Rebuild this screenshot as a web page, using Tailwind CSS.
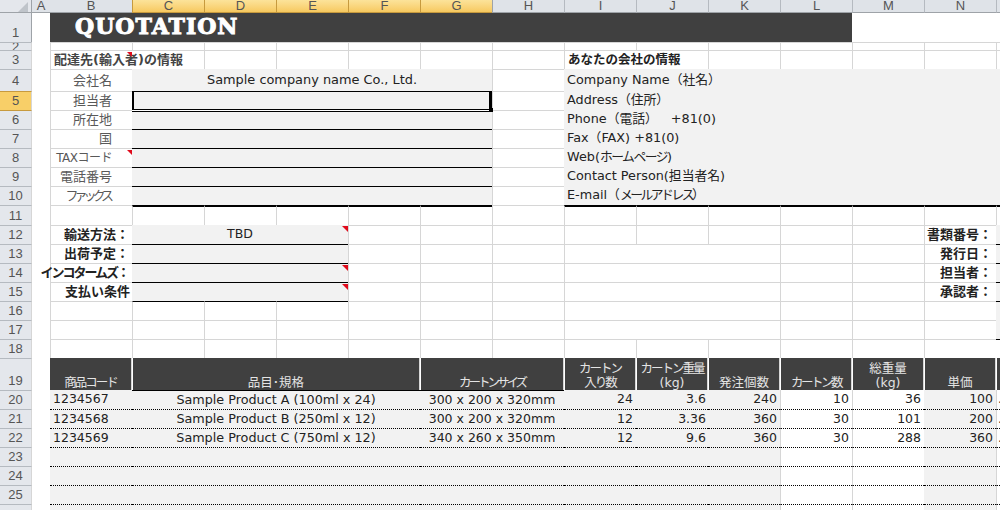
<!DOCTYPE html>
<html lang="ja">
<head>
  <meta charset="UTF-8" />
  <title>Quotation</title>
  <script src="https://cdn.jsdelivr.net/npm/@tailwindcss/browser@4"></script>
</head>
<body class="bg-white overflow-hidden">
  <!-- One grid for the whole sheet: cells draw their own top/left gridlines, fills sit over them -->
  <div class="w-[1000px] h-[510px] overflow-hidden grid grid-cols-[32px_18px_82px_repeat(12,72px)_4px] grid-rows-[13px_29px_8px_19px_22px_19px_19px_19px_19px_19px_19px_20px_19px_19px_19px_19px_19px_19px_19px_32px_19px_19px_19px_19px_19px_19px_6px] font-['DejaVu_Sans','Noto_Sans_CJK_JP',sans-serif] text-[12.5px] text-[#222222] [&>div]:border-t [&>div]:border-l [&>div]:border-[#d6d6d6] [&>div]:whitespace-nowrap">

    <!-- Column headers -->
    <div class="border-0! border-r! border-r-[#9ea3a8]! border-b! border-b-[#9ea3a8]! bg-[#e4e7ec] relative"><span class="absolute left-[18px] top-[2px] size-[10px] bg-[#bfc4ca] [clip-path:polygon(100%_0,100%_100%,0_100%)]"></span></div>
    <div class="border-0! border-b! border-b-[#9ea3a8]! bg-[#dfe3e8] font-['Liberation_Sans'] text-[#555555] text-[13px] leading-[12px] text-center">A</div>
    <div class="border-t-0! border-l-0! border-b! border-b-[#9ea3a8]! bg-[#dfe3e8] font-['Liberation_Sans'] text-[#555555] text-[13px] leading-[12px] text-center">B</div>
    <div class="border-t-0! border-l-[#c79a3e]! border-b! border-b-[#c79a3e]! bg-linear-to-b from-[#fce39a] to-[#f7c95f] font-['Liberation_Sans'] text-[#555555] text-[13px] leading-[12px] text-center">C</div>
    <div class="border-t-0! border-l-[#c79a3e]! border-b! border-b-[#c79a3e]! bg-linear-to-b from-[#fce39a] to-[#f7c95f] font-['Liberation_Sans'] text-[#555555] text-[13px] leading-[12px] text-center">D</div>
    <div class="border-t-0! border-l-[#c79a3e]! border-b! border-b-[#c79a3e]! bg-linear-to-b from-[#fce39a] to-[#f7c95f] font-['Liberation_Sans'] text-[#555555] text-[13px] leading-[12px] text-center">E</div>
    <div class="border-t-0! border-l-[#c79a3e]! border-b! border-b-[#c79a3e]! bg-linear-to-b from-[#fce39a] to-[#f7c95f] font-['Liberation_Sans'] text-[#555555] text-[13px] leading-[12px] text-center">F</div>
    <div class="border-t-0! border-l-[#c79a3e]! border-b! border-b-[#c79a3e]! bg-linear-to-b from-[#fce39a] to-[#f7c95f] font-['Liberation_Sans'] text-[#555555] text-[13px] leading-[12px] text-center">G</div>
    <div class="border-t-0! border-l-[#9ea3a8]! border-b! border-b-[#9ea3a8]! bg-[#dfe3e8] font-['Liberation_Sans'] text-[#555555] text-[13px] leading-[12px] text-center">H</div>
    <div class="border-t-0! border-l-[#b5bac0]! border-b! border-b-[#9ea3a8]! bg-[#dfe3e8] font-['Liberation_Sans'] text-[#555555] text-[13px] leading-[12px] text-center">I</div>
    <div class="border-t-0! border-l-[#b5bac0]! border-b! border-b-[#9ea3a8]! bg-[#dfe3e8] font-['Liberation_Sans'] text-[#555555] text-[13px] leading-[12px] text-center">J</div>
    <div class="border-t-0! border-l-[#b5bac0]! border-b! border-b-[#9ea3a8]! bg-[#dfe3e8] font-['Liberation_Sans'] text-[#555555] text-[13px] leading-[12px] text-center">K</div>
    <div class="border-t-0! border-l-[#b5bac0]! border-b! border-b-[#9ea3a8]! bg-[#dfe3e8] font-['Liberation_Sans'] text-[#555555] text-[13px] leading-[12px] text-center">L</div>
    <div class="border-t-0! border-l-[#b5bac0]! border-b! border-b-[#9ea3a8]! bg-[#dfe3e8] font-['Liberation_Sans'] text-[#555555] text-[13px] leading-[12px] text-center">M</div>
    <div class="border-t-0! border-l-[#b5bac0]! border-b! border-b-[#9ea3a8]! bg-[#dfe3e8] font-['Liberation_Sans'] text-[#555555] text-[13px] leading-[12px] text-center">N</div>
    <div class="border-t-0! border-l-[#b5bac0]! border-b! border-b-[#9ea3a8]! bg-[#dfe3e8]"></div>

    <!-- Row 1 -->
    <div class="border-0! border-r! border-r-[#9ea3a8]! bg-[#e4e7ec] flex items-end justify-center text-[#555555] font-['Liberation_Sans'] text-[13px]">1</div>
    <div class="border-0!"></div>
    <div class="col-span-11 border-0! bg-[#404040] flex items-center pl-[25px] pb-[2px] font-['DejaVu_Serif'] font-bold text-[22px] tracking-[1px] [-webkit-text-stroke:1px_white] text-white">QUOTATION</div>
    <div class="col-span-3 border-0!"></div>

    <!-- Row 2 -->
    <div class="border-l-0! border-t-[#b5bac0]! border-r border-r-[#9ea3a8] bg-[#e4e7ec] overflow-hidden flex items-start justify-center text-[#555555] font-['Liberation_Sans'] text-[13px] leading-[8px]">2</div>
    <div class="border-0!"></div>
    <div></div><div></div><div></div><div></div><div></div><div></div><div></div><div></div><div></div><div></div><div></div><div></div><div></div><div></div>

    <!-- Row 3 -->
    <div class="border-l-0! border-t-[#b5bac0]! border-r border-r-[#9ea3a8] bg-[#e4e7ec] flex items-center justify-center text-[#555555] font-['Liberation_Sans'] text-[13px]">3</div>
    <div class="border-0!"></div>
    <div class="relative flex items-center pl-[3px] font-bold text-[13px] text-[#444444]">配達先(輸入者)の情報<span class="absolute right-0 top-[1px] size-[5px] bg-[#e00b1c] [clip-path:polygon(0_0,100%_0,100%_100%)]"></span></div>
    <div class="border-l-0!"></div><div></div><div></div><div></div><div></div><div></div>
    <div class="flex items-center pl-[3px] font-bold">あなたの会社の情報</div>
    <div class="border-l-0!"></div><div></div><div></div><div></div><div></div><div></div>

    <!-- Row 4 -->
    <div class="border-l-0! border-t-[#b5bac0]! border-r border-r-[#9ea3a8] bg-[#e4e7ec] flex items-center justify-center text-[#555555] font-['Liberation_Sans'] text-[13px]">4</div>
    <div class="border-0!"></div>
    <div class="flex items-center justify-end pr-[20px] text-[#595959] text-[13px]">会社名</div>
    <div class="col-span-5 border-0! bg-[#f2f2f2] flex items-center justify-center text-[12.9px]">Sample company name Co., Ltd.</div>
    <div></div>
    <div class="col-span-7 border-0! bg-[#f2f2f2] flex items-center pl-[3px] text-[12.8px]">Company Name（社名）</div>

    <!-- Row 5, holds the selected cell -->
    <div class="border-l-0! border-t-[#c79a3e]! border-r border-r-[#c79a3e] bg-[#f8cf68] flex items-center justify-center text-[#555555] font-['Liberation_Sans'] text-[13px]">5</div>
    <div class="border-0!"></div>
    <div class="flex items-center justify-end pr-[20px] text-[#595959] text-[13px]">担当者</div>
    <div class="col-span-5 border-0! bg-[#f2f2f2] relative">
      <div class="absolute inset-x-0 top-0 h-[21px] border-y border-black z-10">
        <span class="absolute left-0 -top-[1px] w-[2px] h-[19px] bg-black"></span>
        <span class="absolute right-0 -top-[1px] w-[3px] h-[19px] bg-black"></span>
        <span class="absolute inset-x-0 top-[17px] h-[1px] bg-black"></span>
        <span class="absolute inset-x-0 top-[18px] h-[1px] bg-white"></span>
        <span class="absolute -right-[1px] top-[16px] size-[4px] bg-black"></span>
      </div>
    </div>
    <div></div>
    <div class="col-span-7 border-0! bg-[#f2f2f2] flex items-center pl-[3px] pb-[2px] text-[12.8px]">Address（住所）</div>

    <!-- Row 6 -->
    <div class="border-l-0! border-t-[#c79a3e]! border-r border-r-[#9ea3a8] bg-[#e4e7ec] flex items-center justify-center text-[#555555] font-['Liberation_Sans'] text-[13px]">6</div>
    <div class="border-0!"></div>
    <div class="flex items-center justify-end pr-[20px] text-[#595959] text-[13px]">所在地</div>
    <div class="col-span-5 border-l-0! border-t-black! bg-[#f2f2f2]"></div>
    <div></div>
    <div class="col-span-7 border-0! bg-[#f2f2f2] flex items-center pl-[3px] pb-[2px] text-[12.8px]">Phone（電話）<span class="pl-[13px]">+81(0)</span></div>

    <!-- Row 7 -->
    <div class="border-l-0! border-t-[#b5bac0]! border-r border-r-[#9ea3a8] bg-[#e4e7ec] flex items-center justify-center text-[#555555] font-['Liberation_Sans'] text-[13px]">7</div>
    <div class="border-0!"></div>
    <div class="flex items-center justify-end pr-[20px] text-[#595959] text-[13px]">国</div>
    <div class="col-span-5 border-l-0! border-t-black! bg-[#f2f2f2]"></div>
    <div></div>
    <div class="col-span-7 border-0! bg-[#f2f2f2] flex items-center pl-[3px] pb-[2px] text-[12.8px]">Fax（FAX) +81(0)</div>

    <!-- Row 8 -->
    <div class="border-l-0! border-t-[#b5bac0]! border-r border-r-[#9ea3a8] bg-[#e4e7ec] flex items-center justify-center text-[#555555] font-['Liberation_Sans'] text-[13px]">8</div>
    <div class="border-0!"></div>
    <div class="relative flex items-center justify-end pr-[20px] text-[#595959] text-[12px] tracking-[-0.5px]">TAXコード<span class="absolute right-0 top-[1px] size-[5px] bg-[#e00b1c] [clip-path:polygon(0_0,100%_0,100%_100%)]"></span></div>
    <div class="col-span-5 border-l-0! border-t-black! bg-[#f2f2f2]"></div>
    <div></div>
    <div class="col-span-7 border-0! bg-[#f2f2f2] flex items-center pl-[3px] pb-[2px] text-[12.8px]">Web(<span class="tracking-[-1.5px]">ホームページ</span>)</div>

    <!-- Row 9 -->
    <div class="border-l-0! border-t-[#b5bac0]! border-r border-r-[#9ea3a8] bg-[#e4e7ec] flex items-center justify-center text-[#555555] font-['Liberation_Sans'] text-[13px]">9</div>
    <div class="border-0!"></div>
    <div class="flex items-center justify-end pr-[20px] text-[#595959] text-[13px]">電話番号</div>
    <div class="col-span-5 border-l-0! border-t-black! bg-[#f2f2f2]"></div>
    <div></div>
    <div class="col-span-7 border-0! bg-[#f2f2f2] flex items-center pl-[3px] pb-[2px] text-[12.8px]">Contact Person(担当者名)</div>

    <!-- Row 10 -->
    <div class="border-l-0! border-t-[#b5bac0]! border-r border-r-[#9ea3a8] bg-[#e4e7ec] flex items-center justify-center text-[#555555] font-['Liberation_Sans'] text-[13px]">10</div>
    <div class="border-0!"></div>
    <div class="flex items-center justify-end pr-[22px] text-[#595959] text-[13px] tracking-[-4px]">ファックス</div>
    <div class="col-span-5 border-l-0! border-t-black! bg-[#f2f2f2]"></div>
    <div></div>
    <div class="col-span-7 border-0! bg-[#f2f2f2] flex items-center pl-[3px] pb-[2px] text-[12.8px]">E-mail（<span class="tracking-[-2.5px]">メールアドレス</span>）</div>

    <!-- Row 11 -->
    <div class="border-l-0! border-t-[#b5bac0]! border-r border-r-[#9ea3a8] bg-[#e4e7ec] flex items-center justify-center text-[#555555] font-['Liberation_Sans'] text-[13px]">11</div>
    <div class="border-0!"></div>
    <div></div>
    <div class="border-t-2! border-t-black!"></div><div class="border-t-2! border-t-black!"></div><div class="border-t-2! border-t-black!"></div><div class="border-t-2! border-t-black!"></div><div class="border-t-2! border-t-black!"></div>
    <div></div>
    <div class="border-t-2! border-t-black!"></div><div class="border-t-2! border-t-black!"></div><div class="border-t-2! border-t-black!"></div><div class="border-t-2! border-t-black!"></div><div class="border-t-2! border-t-black!"></div><div class="border-t-2! border-t-black!"></div><div class="border-t-2! border-t-black!"></div>

    <!-- Row 12 -->
    <div class="border-l-0! border-t-[#b5bac0]! border-r border-r-[#9ea3a8] bg-[#e4e7ec] flex items-center justify-center text-[#555555] font-['Liberation_Sans'] text-[13px]">12</div>
    <div class="border-0!"></div>
    <div class="flex items-center justify-end pr-[3px] font-bold text-[13px]">輸送方法：</div>
    <div class="col-span-3 border-0! bg-[#f2f2f2] relative flex items-center justify-center">TBD<span class="absolute right-0 top-[1px] size-[6px] bg-[#e00b1c] [clip-path:polygon(0_0,100%_0,100%_100%)]"></span></div>
    <div></div><div></div><div></div><div></div><div></div><div></div><div></div><div></div>
    <div class="flex items-center justify-end pr-[4px] font-bold text-[13px]">書類番号：</div>
    <div class="border-0! bg-[#f2f2f2]"></div>

    <!-- Row 13 -->
    <div class="border-l-0! border-t-[#b5bac0]! border-r border-r-[#9ea3a8] bg-[#e4e7ec] flex items-center justify-center text-[#555555] font-['Liberation_Sans'] text-[13px]">13</div>
    <div class="border-0!"></div>
    <div class="flex items-center justify-end pr-[3px] font-bold text-[13px]">出荷予定：</div>
    <div class="col-span-3 border-l-0! border-t-black! bg-[#f2f2f2]"></div>
    <div></div><div></div><div></div><div class="col-span-3"></div><div></div><div></div>
    <div class="flex items-center justify-end pr-[4px] font-bold text-[13px]">発行日：</div>
    <div class="border-l-0! border-t-black! bg-[#f2f2f2]"></div>

    <!-- Row 14 -->
    <div class="border-l-0! border-t-[#b5bac0]! border-r border-r-[#9ea3a8] bg-[#e4e7ec] flex items-center justify-center text-[#555555] font-['Liberation_Sans'] text-[13px]">14</div>
    <div class="border-0!"></div>
    <div class="flex items-center justify-end pr-[4px] font-bold text-[13px] tracking-[-2px]">インコタームズ：</div>
    <div class="col-span-3 border-l-0! border-t-black! bg-[#f2f2f2] relative"><span class="absolute right-0 top-[1px] size-[6px] bg-[#e00b1c] [clip-path:polygon(0_0,100%_0,100%_100%)]"></span></div>
    <div></div><div></div><div></div><div class="col-span-3"></div><div></div><div></div>
    <div class="flex items-center justify-end pr-[4px] font-bold text-[13px]">担当者：</div>
    <div class="border-l-0! border-t-black! bg-[#f2f2f2]"></div>

    <!-- Row 15 -->
    <div class="border-l-0! border-t-[#b5bac0]! border-r border-r-[#9ea3a8] bg-[#e4e7ec] flex items-center justify-center text-[#555555] font-['Liberation_Sans'] text-[13px]">15</div>
    <div class="border-0!"></div>
    <div class="flex items-center justify-end pr-[2px] font-bold text-[13px]">支払い条件</div>
    <div class="col-span-3 border-l-0! border-t-black! bg-[#f2f2f2] relative"><span class="absolute right-0 top-[1px] size-[6px] bg-[#e00b1c] [clip-path:polygon(0_0,100%_0,100%_100%)]"></span></div>
    <div></div><div></div><div></div><div class="col-span-3"></div><div></div><div></div>
    <div class="flex items-center justify-end pr-[4px] font-bold text-[13px]">承認者：</div>
    <div class="border-l-0! border-t-black! bg-[#f2f2f2]"></div>

    <!-- Row 16 -->
    <div class="border-l-0! border-t-[#b5bac0]! border-r border-r-[#9ea3a8] bg-[#e4e7ec] flex items-center justify-center text-[#555555] font-['Liberation_Sans'] text-[13px]">16</div>
    <div class="border-0!"></div>
    <div></div>
    <div class="border-t-black!"></div><div class="border-t-black!"></div><div class="border-t-black!"></div>
    <div></div><div></div><div></div><div class="col-span-3"></div><div></div><div></div><div></div>
    <div class="border-l-0! border-t-black! bg-[#f2f2f2]"></div>

    <!-- Row 17 -->
    <div class="border-l-0! border-t-[#b5bac0]! border-r border-r-[#9ea3a8] bg-[#e4e7ec] flex items-center justify-center text-[#555555] font-['Liberation_Sans'] text-[13px]">17</div>
    <div class="border-0!"></div>
    <div></div><div></div><div></div><div></div><div></div><div></div><div></div><div class="col-span-3"></div><div></div><div></div><div></div>
    <div class="border-0! bg-[#f2f2f2]"></div>

    <!-- Row 18 -->
    <div class="border-l-0! border-t-[#b5bac0]! border-r border-r-[#9ea3a8] bg-[#e4e7ec] flex items-center justify-center text-[#555555] font-['Liberation_Sans'] text-[13px]">18</div>
    <div class="border-0!"></div>
    <div></div><div></div><div></div><div></div><div></div><div></div><div></div><div></div><div></div><div></div><div></div><div></div><div></div>
    <div class="border-l-0! border-t-black!"></div>

    <!-- Row 19, table header -->
    <div class="border-l-0! border-t-[#b5bac0]! border-r border-r-[#9ea3a8] bg-[#e4e7ec] flex items-end justify-center text-[#555555] font-['Liberation_Sans'] text-[13px]">19</div>
    <div class="border-0!"></div>
    <div class="border-t-0! border-l-0! border-r border-r-white bg-[#404040] text-[#e4e4e4] flex items-end justify-center leading-[14px] tracking-[-2px]">商品コード</div>
    <div class="col-span-4 border-t-0! border-l-white! border-r border-r-white bg-[#404040] text-[#e4e4e4] flex items-end justify-center leading-[14px]">品目･規格</div>
    <div class="col-span-2 border-t-0! border-l-white! border-r border-r-white bg-[#404040] text-[#e4e4e4] flex items-end justify-center leading-[14px] tracking-[-3px]">カートンサイズ</div>
    <div class="border-t-0! border-l-white! border-r border-r-white bg-[#404040] text-[#e4e4e4] flex items-end justify-center leading-[14px] text-center tracking-[-2px] whitespace-normal!">カートン<br>入り数</div>
    <div class="border-t-0! border-l-white! border-r border-r-white bg-[#404040] text-[#e4e4e4] flex items-end justify-center leading-[14px] text-center whitespace-normal!"><span><span class="tracking-[-2px]">カートン重量</span><br>(kg)</span></div>
    <div class="border-t-0! border-l-white! border-r border-r-white bg-[#404040] text-[#e4e4e4] flex items-end justify-center leading-[14px]">発注個数</div>
    <div class="border-t-0! border-l-white! border-r border-r-white bg-[#404040] text-[#e4e4e4] flex items-end justify-center leading-[14px] tracking-[-2.5px]">カートン数</div>
    <div class="border-t-0! border-l-white! border-r border-r-white bg-[#404040] text-[#e4e4e4] flex items-end justify-center leading-[14px] text-center whitespace-normal!">総重量<br>(kg)</div>
    <div class="border-t-0! border-l-white! border-r border-r-white bg-[#404040] text-[#e4e4e4] flex items-end justify-center leading-[14px]">単価</div>
    <div class="border-t-0! border-l-white! bg-[#404040]"></div>

    <!-- Row 20 -->
    <div class="border-l-0! border-t-[#b5bac0]! border-r border-r-[#9ea3a8] bg-[#e4e7ec] flex items-center justify-center text-[#555555] font-['Liberation_Sans'] text-[13px]">20</div>
    <div class="border-0!"></div>
    <div class="border-0! bg-[#f2f2f2] flex items-center pl-[3px]">1234567</div>
    <div class="col-span-4 border-l-0! border-t-black! bg-[#f2f2f2] flex items-center justify-center text-[12.75px]">Sample Product A (100ml x 24)</div>
    <div class="col-span-2 border-l-0! border-t-black! bg-[#f2f2f2] flex items-center justify-center">300 x 200 x 320mm</div>
    <div class="border-0! bg-[#f2f2f2] flex items-center justify-end pr-[3px]">24</div>
    <div class="border-0! bg-[#f2f2f2] flex items-center justify-end pr-[2px]">3.6</div>
    <div class="border-0! bg-[#f2f2f2] flex items-center justify-end pr-[3px]">240</div>
    <div class="border-t-0! flex items-center justify-end pr-[3px]">10</div>
    <div class="border-t-0! flex items-center justify-end pr-[3px]">36</div>
    <div class="border-0! bg-[#f2f2f2] flex items-center justify-end pr-[3px]">100</div>
    <div class="border-t-0! flex items-center pl-[1px]">.</div>

    <!-- Row 21 -->
    <div class="border-l-0! border-t-[#b5bac0]! border-r border-r-[#9ea3a8] bg-[#e4e7ec] flex items-center justify-center text-[#555555] font-['Liberation_Sans'] text-[13px]">21</div>
    <div class="border-0!"></div>
    <div class="border-l-0! border-dotted! border-t-black! bg-[#f2f2f2] flex items-center pl-[3px]">1234568</div>
    <div class="col-span-4 border-l-0! border-dotted! border-t-black! bg-[#f2f2f2] flex items-center justify-center text-[12.75px]">Sample Product B (250ml x 12)</div>
    <div class="col-span-2 border-l-0! border-dotted! border-t-black! bg-[#f2f2f2] flex items-center justify-center">300 x 200 x 320mm</div>
    <div class="border-l-0! border-dotted! border-t-black! bg-[#f2f2f2] flex items-center justify-end pr-[3px]">12</div>
    <div class="border-l-0! border-dotted! border-t-black! bg-[#f2f2f2] flex items-center justify-end pr-[2px]">3.36</div>
    <div class="border-l-0! border-dotted! border-t-black! bg-[#f2f2f2] flex items-center justify-end pr-[3px]">360</div>
    <div class="[border-top-style:dotted]! border-t-black! flex items-center justify-end pr-[3px]">30</div>
    <div class="[border-top-style:dotted]! border-t-black! flex items-center justify-end pr-[3px]">101</div>
    <div class="border-l-0! border-dotted! border-t-black! bg-[#f2f2f2] flex items-center justify-end pr-[3px]">200</div>
    <div class="[border-top-style:dotted]! border-t-black! flex items-center pl-[1px]">.</div>

    <!-- Row 22 -->
    <div class="border-l-0! border-t-[#b5bac0]! border-r border-r-[#9ea3a8] bg-[#e4e7ec] flex items-center justify-center text-[#555555] font-['Liberation_Sans'] text-[13px]">22</div>
    <div class="border-0!"></div>
    <div class="border-l-0! border-dotted! border-t-black! bg-[#f2f2f2] flex items-center pl-[3px]">1234569</div>
    <div class="col-span-4 border-l-0! border-dotted! border-t-black! bg-[#f2f2f2] flex items-center justify-center text-[12.75px]">Sample Product C (750ml x 12)</div>
    <div class="col-span-2 border-l-0! border-dotted! border-t-black! bg-[#f2f2f2] flex items-center justify-center">340 x 260 x 350mm</div>
    <div class="border-l-0! border-dotted! border-t-black! bg-[#f2f2f2] flex items-center justify-end pr-[3px]">12</div>
    <div class="border-l-0! border-dotted! border-t-black! bg-[#f2f2f2] flex items-center justify-end pr-[2px]">9.6</div>
    <div class="border-l-0! border-dotted! border-t-black! bg-[#f2f2f2] flex items-center justify-end pr-[3px]">360</div>
    <div class="[border-top-style:dotted]! border-t-black! flex items-center justify-end pr-[3px]">30</div>
    <div class="[border-top-style:dotted]! border-t-black! flex items-center justify-end pr-[3px]">288</div>
    <div class="border-l-0! border-dotted! border-t-black! bg-[#f2f2f2] flex items-center justify-end pr-[3px]">360</div>
    <div class="[border-top-style:dotted]! border-t-black! flex items-center pl-[1px]">.</div>

    <!-- Row 23 -->
    <div class="border-l-0! border-t-[#b5bac0]! border-r border-r-[#9ea3a8] bg-[#e4e7ec] flex items-center justify-center text-[#555555] font-['Liberation_Sans'] text-[13px]">23</div>
    <div class="border-0!"></div>
    <div class="border-l-0! border-dotted! border-t-black! bg-[#f2f2f2]"></div>
    <div class="col-span-4 border-l-0! border-dotted! border-t-black! bg-[#f2f2f2]"></div>
    <div class="col-span-2 border-l-0! border-dotted! border-t-black! bg-[#f2f2f2]"></div>
    <div class="border-l-0! border-dotted! border-t-black! bg-[#f2f2f2]"></div>
    <div class="border-l-0! border-dotted! border-t-black! bg-[#f2f2f2]"></div>
    <div class="border-l-0! border-dotted! border-t-black! bg-[#f2f2f2]"></div>
    <div class="[border-top-style:dotted]! border-t-black!"></div>
    <div class="[border-top-style:dotted]! border-t-black!"></div>
    <div class="border-l-0! border-dotted! border-t-black! bg-[#f2f2f2]"></div>
    <div class="[border-top-style:dotted]! border-t-black!"></div>

    <!-- Row 24 -->
    <div class="border-l-0! border-t-[#b5bac0]! border-r border-r-[#9ea3a8] bg-[#e4e7ec] flex items-center justify-center text-[#555555] font-['Liberation_Sans'] text-[13px]">24</div>
    <div class="border-0!"></div>
    <div class="border-l-0! border-dotted! border-t-black! bg-[#f2f2f2]"></div>
    <div class="col-span-4 border-l-0! border-dotted! border-t-black! bg-[#f2f2f2]"></div>
    <div class="col-span-2 border-l-0! border-dotted! border-t-black! bg-[#f2f2f2]"></div>
    <div class="border-l-0! border-dotted! border-t-black! bg-[#f2f2f2]"></div>
    <div class="border-l-0! border-dotted! border-t-black! bg-[#f2f2f2]"></div>
    <div class="border-l-0! border-dotted! border-t-black! bg-[#f2f2f2]"></div>
    <div class="[border-top-style:dotted]! border-t-black!"></div>
    <div class="[border-top-style:dotted]! border-t-black!"></div>
    <div class="border-l-0! border-dotted! border-t-black! bg-[#f2f2f2]"></div>
    <div class="[border-top-style:dotted]! border-t-black!"></div>

    <!-- Row 25 -->
    <div class="border-l-0! border-t-[#b5bac0]! border-r border-r-[#9ea3a8] bg-[#e4e7ec] flex items-center justify-center text-[#555555] font-['Liberation_Sans'] text-[13px]">25</div>
    <div class="border-0!"></div>
    <div class="border-l-0! border-dotted! border-t-black! bg-[#f2f2f2]"></div>
    <div class="col-span-4 border-l-0! border-dotted! border-t-black! bg-[#f2f2f2]"></div>
    <div class="col-span-2 border-l-0! border-dotted! border-t-black! bg-[#f2f2f2]"></div>
    <div class="border-l-0! border-dotted! border-t-black! bg-[#f2f2f2]"></div>
    <div class="border-l-0! border-dotted! border-t-black! bg-[#f2f2f2]"></div>
    <div class="border-l-0! border-dotted! border-t-black! bg-[#f2f2f2]"></div>
    <div class="[border-top-style:dotted]! border-t-black!"></div>
    <div class="[border-top-style:dotted]! border-t-black!"></div>
    <div class="border-l-0! border-dotted! border-t-black! bg-[#f2f2f2]"></div>
    <div class="[border-top-style:dotted]! border-t-black!"></div>

    <!-- Row 26, cut off by the window -->
    <div class="border-l-0! border-t-[#b5bac0]! border-r border-r-[#9ea3a8] bg-[#e4e7ec]"></div>
    <div class="border-0!"></div>
    <div class="border-l-0! border-dotted! border-t-black! bg-[#f2f2f2]"></div>
    <div class="col-span-4 border-l-0! border-dotted! border-t-black! bg-[#f2f2f2]"></div>
    <div class="col-span-2 border-l-0! border-dotted! border-t-black! bg-[#f2f2f2]"></div>
    <div class="border-l-0! border-dotted! border-t-black! bg-[#f2f2f2]"></div>
    <div class="border-l-0! border-dotted! border-t-black! bg-[#f2f2f2]"></div>
    <div class="border-l-0! border-dotted! border-t-black! bg-[#f2f2f2]"></div>
    <div class="[border-top-style:dotted]! border-t-black!"></div>
    <div class="[border-top-style:dotted]! border-t-black!"></div>
    <div class="border-l-0! border-dotted! border-t-black! bg-[#f2f2f2]"></div>
    <div class="[border-top-style:dotted]! border-t-black!"></div>
  </div>
</body>
</html>
